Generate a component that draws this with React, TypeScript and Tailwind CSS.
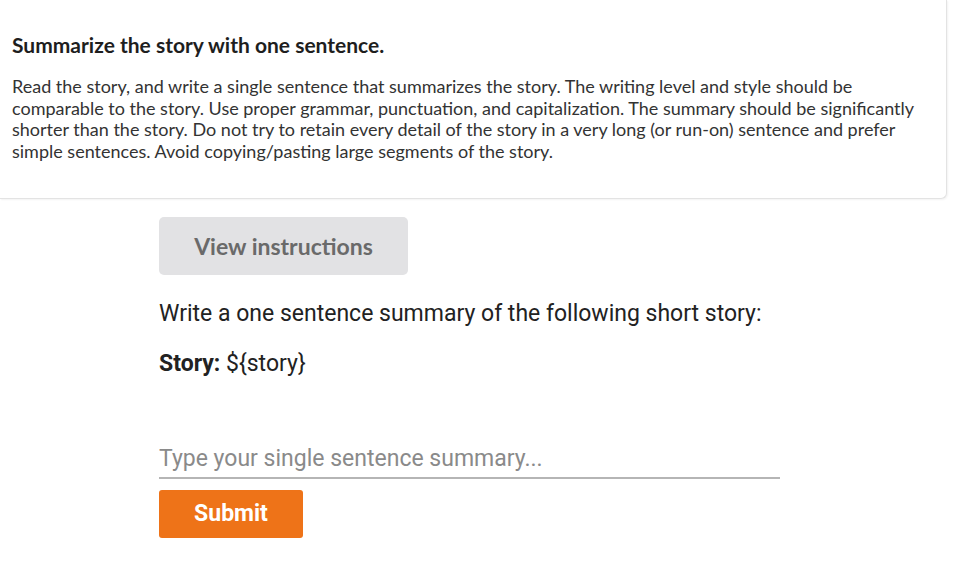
import React, { useState } from "react";

export default function App() {
  const [summary, setSummary] = useState("");

  return (
    <div className="min-h-[564px] w-[960px] bg-white">
      <div className="w-[947px] rounded-br-[6px] border-r border-b border-[#e3e3e3] bg-white pt-[33px] pb-[35px] pl-[12px] pr-[12px] shadow-[1px_1px_2px_rgba(0,0,0,0.05)] font-['Lato',sans-serif]">
        <h2 className="text-[21px] font-bold leading-[24px] text-[#1e1e1e]">
          Summarize the story with one sentence.
        </h2>
        <p className="mt-[19px] text-[18px] leading-[21.7px] text-[#333]">
          Read the story, and write a single sentence that summarizes the story. The writing level and
          style should be comparable to the story. Use proper grammar, punctuation, and capitalization.
          The summary should be significantly shorter than the story. Do not try to retain every detail
          of the story in a very long (or run-on) sentence and prefer simple sentences. Avoid
          copying/pasting large segments of the story.
        </p>
      </div>

      <div className="ml-[159px] mt-[18px] w-[621px] font-['Roboto',sans-serif]">
        <button
          type="button"
          className="flex h-[58px] w-[249px] items-center justify-center rounded-[5px] bg-[#e2e2e4] font-['Lato',sans-serif] text-[23px] font-bold text-[#6a6a6a]"
        >
          View instructions
        </button>

        <p className="mt-[22px] text-[23px] leading-[34px] text-[#222]">
          Write a one sentence summary of the following short story:
        </p>
        <p className="mt-[16px] text-[23px] leading-[34px] text-[#222]">
          <span className="font-bold">Story:</span> {"${story}"}
        </p>

        <input
          type="text"
          value={summary}
          onChange={(e) => setSummary(e.target.value)}
          placeholder="Type your single sentence summary..."
          className="mt-[59px] block h-[39px] w-full border-b-2 border-[#b5b5b5] bg-transparent text-[23px] text-[#222] outline-none placeholder:text-[#8a8a8a]"
        />

        <button
          type="submit"
          className="mt-[11px] flex h-[48px] w-[144px] items-center justify-center rounded-[3px] bg-[#ee7318] text-[23px] font-bold text-white"
        >
          Submit
        </button>
      </div>
    </div>
  );
}
